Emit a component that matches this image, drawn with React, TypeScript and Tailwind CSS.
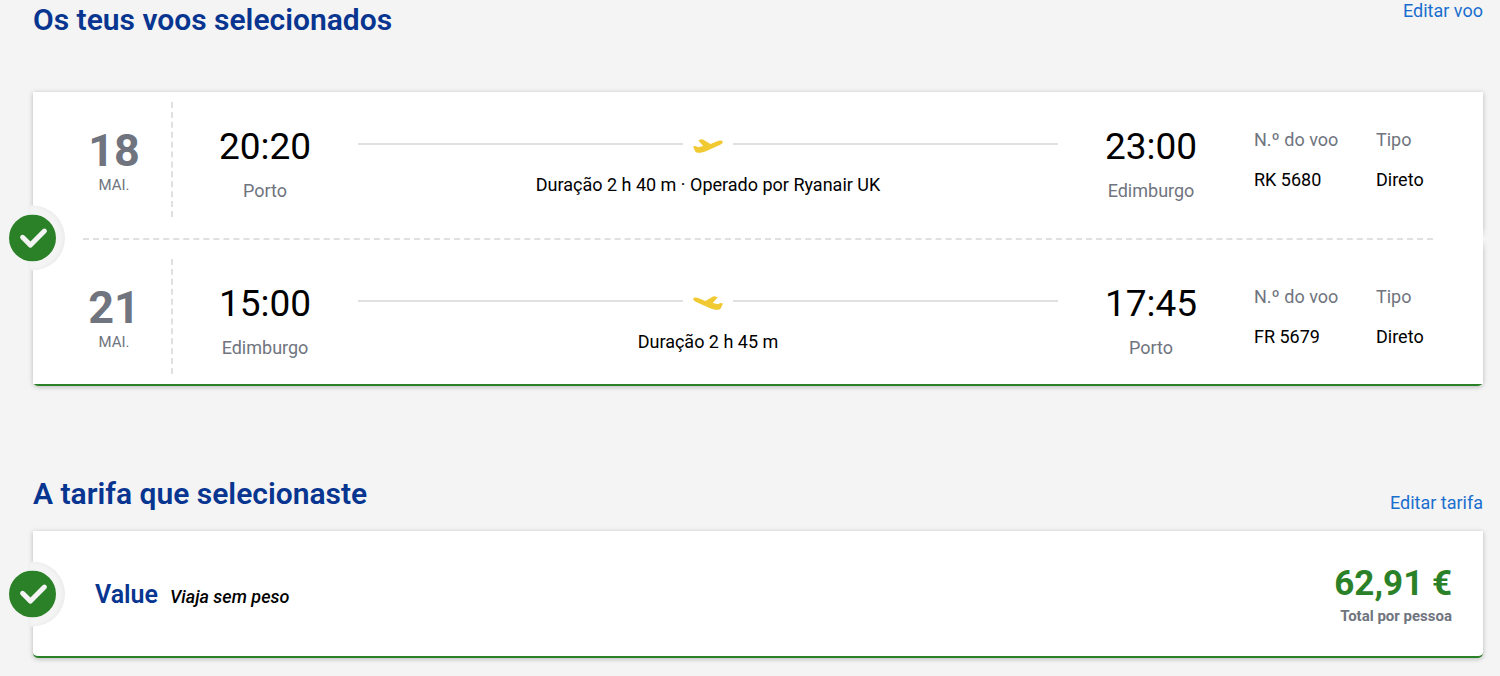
type Flight = {
    day: string;
    month: string;
    departTime: string;
    departCity: string;
    arriveTime: string;
    arriveCity: string;
    info: string;
    number: string;
    inbound?: boolean;
};

const flights: Flight[] = [
    {
        day: "18",
        month: "MAI.",
        departTime: "20:20",
        departCity: "Porto",
        arriveTime: "23:00",
        arriveCity: "Edimburgo",
        info: "Duração 2 h 40 m · Operado por Ryanair UK",
        number: "RK 5680",
    },
    {
        day: "21",
        month: "MAI.",
        departTime: "15:00",
        departCity: "Edimburgo",
        arriveTime: "17:45",
        arriveCity: "Porto",
        info: "Duração 2 h 45 m",
        number: "FR 5679",
        inbound: true,
    },
];

const PlaneIcon = ({ inbound }: { inbound?: boolean }) => {
    return (
        <svg
            className={`h-5 w-[50px] shrink-0 text-[#f1c933] ${inbound ? "-scale-x-100" : ""}`}
            viewBox="0 -2 50 20"
            fill="currentColor"
            aria-hidden="true"
        >
            <path d="M10 10.6 L12.6 10 L15 11.3 L20.2 9.9 L15.2 4.2 L18.6 3.2 C19.1 3.1 19.5 3.2 19.9 3.5 L27.6 7.9 L34.2 5.3 C36.6 4.4 39 4.3 39.6 5.6 C40.2 7 38.6 8.2 36.8 9 L23.4 15 C20.4 16.3 17.6 17 14.6 16.7 C13.4 16.6 12.7 16.1 12.2 15.2 Z" />
        </svg>
    );
};

const SelectedBadge = () => {
    return (
        <div className="absolute top-1/2 -left-[3px] h-[65px] w-[35px] -translate-y-1/2 rounded-r-full bg-[#f4f4f4] shadow-[inset_-2px_0_4px_rgba(0,0,0,0.04)]">
            <svg
                className="absolute top-[9px] -left-[21px] size-[47px]"
                viewBox="0 0 47 47"
                fill="none"
                aria-hidden="true"
            >
                <circle cx="23.5" cy="23.5" r="23.5" fill="#2b8127" />
                <path
                    d="M13.6 22.8 L21.5 30.6 L35.4 16.6"
                    stroke="#f4f4f4"
                    strokeWidth="5"
                    strokeLinecap="round"
                    strokeLinejoin="round"
                />
            </svg>
        </div>
    );
};

const Stop = ({ time, city }: { time: string; city: string }) => {
    return (
        <div className="w-[94px] shrink-0 pt-[21px] text-center">
            <p className="text-[37px] leading-12 text-black">{time}</p>
            <p className="mt-2 text-lg leading-6 text-[#6f747e]">{city}</p>
        </div>
    );
};

const FlightRow = ({ flight }: { flight: Flight }) => {
    return (
        <div className="flex min-h-[115px] px-[50px]">
            <div className="w-[90px] shrink-0 border-r-2 border-dashed border-[#e0e0e0] pt-[25px] text-[#6f747e]">
                <div className="w-[62px] text-center">
                    <p className="text-[45px] leading-12 font-bold">
                        {flight.day}
                    </p>
                    <p className="text-[15px] leading-5">{flight.month}</p>
                </div>
            </div>
            <div className="flex flex-1 pl-[45px]">
                <Stop time={flight.departTime} city={flight.departCity} />
                <div className="flex-1 px-[46px] pt-8 text-center">
                    <div className="flex items-center">
                        <span className="h-[2px] flex-1 bg-[#e0e0e0]" />
                        <PlaneIcon inbound={flight.inbound} />
                        <span className="h-[2px] flex-1 bg-[#e0e0e0]" />
                    </div>
                    <p className="mt-[19px] text-lg leading-6 text-black">
                        {flight.info}
                    </p>
                </div>
                <Stop time={flight.arriveTime} city={flight.arriveCity} />
            </div>
            <dl className="flex shrink-0 gap-10 pt-[26px] pr-[10px] pl-14 text-lg leading-6 whitespace-nowrap">
                <div className="w-[82px]">
                    <dt className="text-[#6f747e]">N.º do voo</dt>
                    <dd className="mt-4 text-black">{flight.number}</dd>
                </div>
                <div className="w-[47px]">
                    <dt className="text-[#6f747e]">Tipo</dt>
                    <dd className="mt-4 text-black">Direto</dd>
                </div>
            </dl>
        </div>
    );
};

const App = () => {
    return (
        <main className="min-h-screen bg-[#f4f4f4] pr-[17px] pb-[18px] pl-[33px] font-[Roboto,sans-serif]">
            <section>
                <div className="flex items-start justify-between">
                    <h2 className="text-[30px] leading-10 font-semibold text-[#073590]">
                        Os teus voos selecionados
                    </h2>
                    <a href="#" className="text-lg leading-[22px] text-[#1a6fce]">
                        Editar voo
                    </a>
                </div>
                <div className="mt-[52px] rounded-b-[5px] border-b-2 border-[#2b8127] shadow-[0_1px_5px_rgba(0,0,0,0.25)]">
                    <div className="bg-white py-[10px]">
                        <FlightRow flight={flights[0]} />
                        <div className="relative px-[50px] pt-[21px] pb-[19px]">
                            {/* ticket notch that breaks the card shadow */}
                            <span className="absolute top-[10px] -right-[6px] h-6 w-[6px] bg-linear-to-b from-transparent via-[#f4f4f4] to-transparent" />
                            <hr className="border-t-2 border-dashed border-[#e0e0e0]" />
                            <SelectedBadge />
                        </div>
                        <FlightRow flight={flights[1]} />
                    </div>
                </div>
            </section>

            <section className="mt-[88px]">
                <div className="flex items-end justify-between">
                    <h2 className="text-[30px] leading-10 font-semibold text-[#073590]">
                        A tarifa que selecionaste
                    </h2>
                    <a href="#" className="text-lg leading-[22px] text-[#1a6fce]">
                        Editar tarifa
                    </a>
                </div>
                <div className="relative mt-[17px] flex items-center justify-between rounded-b-[5px] border-b-2 border-[#2b8127] bg-white py-[30px] pr-[31px] pl-[62px] shadow-[0_1px_5px_rgba(0,0,0,0.25)]">
                    <div className="flex items-baseline gap-3 pt-[2px]">
                        <h3 className="text-[25px] leading-8 font-semibold text-[#073590]">
                            Value
                        </h3>
                        <p className="text-lg leading-6 font-medium text-black italic">
                            Viaja sem peso
                        </p>
                    </div>
                    <div className="text-right">
                        <p className="text-[35px] leading-[45px] font-bold text-[#2b8127]">
                            62,91 €
                        </p>
                        <p className="text-[15px] leading-5 font-bold text-[#6f747e]">
                            Total por pessoa
                        </p>
                    </div>
                    <SelectedBadge />
                </div>
            </section>
        </main>
    );
};

export default App;
